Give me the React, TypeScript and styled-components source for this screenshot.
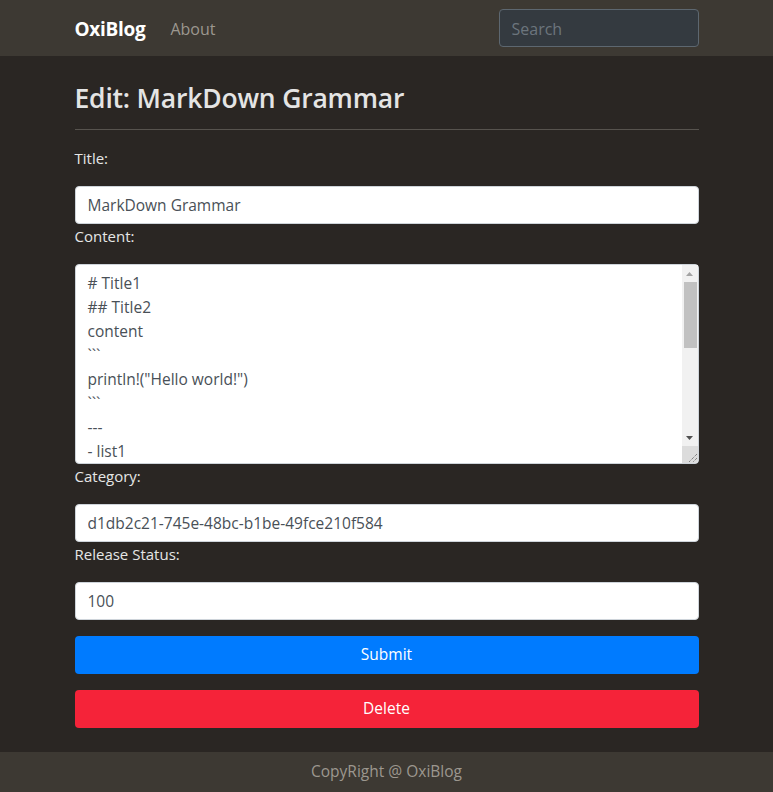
import React from "react";
import styled, { createGlobalStyle } from "styled-components";

const Global = createGlobalStyle`
  html, body { margin: 0; padding: 0; background: #2a2623; }
  body { font-family: "Open Sans", "Noto Sans", sans-serif; font-size: 16px; line-height: 1.5; }
  * { box-sizing: border-box; }
`;

const Page = styled.div`
  min-height: 792px;
  display: flex;
  flex-direction: column;
  background: #2a2623;
`;

const NavBar = styled.nav`
  height: 56px;
  background: #3d3933;
  display: flex;
  justify-content: center;
`;

const NavInner = styled.div`
  width: 624px;
  display: flex;
  align-items: center;
`;

const Brand = styled.a`
  color: #ffffff;
  font-size: 19px;
  font-weight: 700;
  letter-spacing: -0.3px;
  margin-right: 25px;
  padding-top: 2px;
  text-decoration: none;
`;

const NavLink = styled.a`
  color: #9c978f;
  font-size: 16px;
  padding-top: 2px;
  text-decoration: none;
`;

const SearchInput = styled.input`
  margin-left: auto;
  width: 200px;
  height: 38px;
  background: #343a40;
  border: 1px solid #5d6770;
  border-radius: 4px;
  padding: 7px 12px 5px;
  font: inherit;
  color: #ddd;
  &::placeholder { color: #6c757d; }
`;

const Main = styled.main`
  flex: 1;
  display: flex;
  justify-content: center;
  padding: 24px 0 24px;
`;

const Container = styled.div`
  width: 624px;
  display: flex;
  flex-direction: column;
`;

const Heading = styled.h3`
  margin: 0;
  color: #e4e4e4;
  font-size: 26.5px;
  font-weight: 600;
  line-height: 36px;
  letter-spacing: -0.2px;
`;

const Rule = styled.hr`
  border: 0;
  border-top: 1px solid #57534e;
  margin: 13px 0 16px;
`;

const Label = styled.label`
  display: block;
  color: #e6e6e6;
  font-size: 15px;
  line-height: 24px;
  margin-bottom: 16px;
`;

const Field = styled.input`
  display: block;
  width: 100%;
  height: 38px;
  padding: 6px 12px;
  border: 1px solid #ced4da;
  border-radius: 4px;
  background: #fff;
  color: #495057;
  font: inherit;
  font-size: 15.5px;
`;

const AreaWrap = styled.div`
  position: relative;
  height: 200px;
`;

const Area = styled.textarea`
  display: block;
  width: 100%;
  height: 200px;
  padding: 6px 28px 6px 12px;
  border: 1px solid #ced4da;
  border-radius: 4px;
  background: #fff;
  color: #495057;
  font: inherit;
  font-size: 15.5px;
  line-height: 24px;
  resize: none;
  overflow: hidden;
`;

const ScrollBar = styled.div`
  position: absolute;
  top: 1px;
  right: 1px;
  bottom: 1px;
  width: 16px;
  display: flex;
  flex-direction: column;
  background: #f1f1f1;
  border-bottom-right-radius: 3px;
  overflow: hidden;
`;

const ArrowBtn = styled.div`
  height: 17px;
  flex: none;
  display: flex;
  align-items: center;
  justify-content: center;
`;

const Track = styled.div`
  flex: 1;
  display: flex;
  flex-direction: column;
`;

const Thumb = styled.div`
  height: 66px;
  margin: 0 1px 0 2px;
  background: #c1c1c1;
`;

const Corner = styled.div`
  height: 17px;
  flex: none;
  background: #dcdcdc;
  display: flex;
  align-items: flex-end;
  justify-content: flex-end;
`;

const Button = styled.button<{ $tone: "primary" | "danger" }>`
  display: block;
  width: 100%;
  height: 38px;
  border: 0;
  border-radius: 4px;
  margin-top: 16px;
  color: #fff;
  font: inherit;
  font-size: 15.5px;
  background: ${(p) => (p.$tone === "primary" ? "#007bff" : "#f52339")};
`;

const Footer = styled.footer`
  height: 40px;
  background: #3d3933;
  color: #9c978f;
  font-size: 15.5px;
  display: flex;
  align-items: center;
  justify-content: center;
`;

const content = `# Title1
## Title2
content
\`\`\`
println!("Hello world!")
\`\`\`
---
- list1
- list2
- list3
> quote
**bold**
*italic*`;

export default function App() {
  return (
    <Page>
      <Global />
      <NavBar>
        <NavInner>
          <Brand href="#">OxiBlog</Brand>
          <NavLink href="#">About</NavLink>
          <SearchInput placeholder="Search" />
        </NavInner>
      </NavBar>
      <Main>
        <Container>
          <Heading>Edit: MarkDown Grammar</Heading>
          <Rule />
          <Label>Title:</Label>
          <Field defaultValue="MarkDown Grammar" />
          <Label>Content:</Label>
          <AreaWrap>
            <Area defaultValue={content} />
            <ScrollBar>
              <ArrowBtn>
                <svg width="7" height="4" viewBox="0 0 7 4">
                  <polygon points="3.5,0 7,4 0,4" fill="#a3a3a3" />
                </svg>
              </ArrowBtn>
              <Track>
                <Thumb />
              </Track>
              <ArrowBtn>
                <svg width="7" height="4" viewBox="0 0 7 4">
                  <polygon points="0,0 7,0 3.5,4" fill="#505050" />
                </svg>
              </ArrowBtn>
              <Corner>
                <svg width="12" height="12" viewBox="0 0 12 12">
                  <line x1="11" y1="3" x2="3" y2="11" stroke="#5a5a5a" strokeWidth="1" strokeDasharray="1 1" />
                  <line x1="11" y1="7" x2="7" y2="11" stroke="#5a5a5a" strokeWidth="1" strokeDasharray="1 1" />
                </svg>
              </Corner>
            </ScrollBar>
          </AreaWrap>
          <Label>Category:</Label>
          <Field defaultValue="d1db2c21-745e-48bc-b1be-49fce210f584" />
          <Label>Release Status:</Label>
          <Field defaultValue="100" />
          <Button $tone="primary">Submit</Button>
          <Button $tone="danger">Delete</Button>
        </Container>
      </Main>
      <Footer>CopyRight @ OxiBlog</Footer>
    </Page>
  );
}
